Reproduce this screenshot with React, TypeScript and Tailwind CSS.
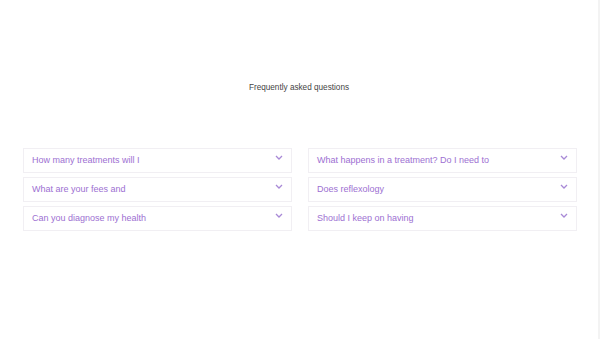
const left = ['How many treatments will I', 'What are your fees and', 'Can you diagnose my health']
const right = ['What happens in a treatment? Do I need to', 'Does reflexology', 'Should I keep on having']

function Chevron() {
  return (
    <svg width="8" height="5" viewBox="0 0 8 5" className="mt-[6px] shrink-0">
      <path d="M1 1l3 3 3-3" fill="none" stroke="#a889d6" strokeWidth="1.3" />
    </svg>
  )
}

function Item({ q }: { q: string }) {
  return (
    <div className="flex h-[25px] items-start justify-between border border-[#f1eff3] bg-white pl-[8px] pr-[8px]">
      <span className="mt-[5px] text-[9px] leading-[12px] text-[#9d70d2]">{q}</span>
      <Chevron />
    </div>
  )
}

export default function App() {
  return (
    <div
      className="relative h-[339px] w-[600px] overflow-hidden border-r-2 border-[#f3f3f3] bg-white"
      style={{ fontFamily: '"Liberation Sans", Arial, sans-serif' }}
    >
      <div className="pt-[83px] text-center text-[8.2px] leading-[10px] text-[#444]">
        Frequently asked questions
      </div>
      <div className="mt-[55px] grid grid-cols-2 gap-x-[16px] pl-[23px] pr-[21px]">
        <div className="flex flex-col gap-[4px]">
          {left.map((q) => (
            <Item key={q} q={q} />
          ))}
        </div>
        <div className="flex flex-col gap-[4px]">
          {right.map((q) => (
            <Item key={q} q={q} />
          ))}
        </div>
      </div>
    </div>
  )
}
